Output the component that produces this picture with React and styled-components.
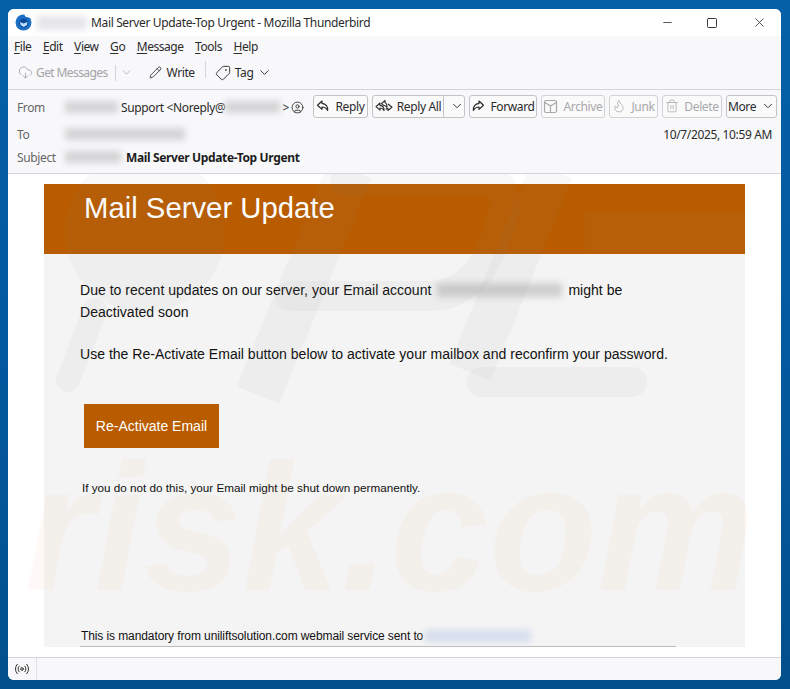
import styled, { createGlobalStyle } from "styled-components";
import { ChevronDown, CircleUser, CloudDownload, Flame, Minus, Pencil, Radio, Square, Tag, Trash2, X } from "lucide-react";

const GlobalStyle = createGlobalStyle`
  html, body {
    margin: 0;
    padding: 0;
    height: 100%;
  }
  body {
    background: #03589c;
    font-family: "Noto Sans", "Open Sans", sans-serif;
    overflow: hidden;
  }
`;

const Desktop = styled.div`
  width: 790px;
  height: 689px;
  box-sizing: border-box;
  padding: 9px 9px 9px 8px;
  background: linear-gradient(180deg, #0560a8 0%, #03589c 60%, #024f8c 100%);
  overflow: hidden;
`;
const Window = styled.div`
  height: 671px;
  display: flex;
  flex-direction: column;
  background: #fff;
  border-radius: 6px;
  overflow: hidden;
`;
const TitleBar = styled.div`
  height: 27px;
  flex: none;
  display: flex;
  align-items: center;
  padding-left: 7px;
  background: #fff;
  font-size: 12px;
  color: #2b2b2b;
  white-space: nowrap;
`;
const TitleText = styled.span`
  margin-left: 4px;
  letter-spacing: -0.36px;
`;
const WindowControls = styled.div`
  margin-left: auto;
  display: flex;
  align-items: center;
  gap: 32px;
  padding-right: 14px;
  color: #222;
`;
const CloseIcon = styled(X)`
  margin-left: 2px;
`;
const Blur = styled.span`
  display: inline-block;
  flex: none;
  width: ${(p) => p.$w}px;
  height: ${(p) => p.$h || 12}px;
  margin: ${(p) => p.$m || "0"};
  background: ${(p) => p.$c || "#d4d4d6"};
  filter: blur(3px);
`;
const MenuBar = styled.div`
  height: 20px;
  flex: none;
  display: flex;
  align-items: center;
  gap: 11.5px;
  padding-left: 6px;
  background: #f8f8fa;
  font-size: 12px;
  color: #2b2b2b;
  letter-spacing: -0.45px;
`;
const AccessKey = styled.span`
  text-decoration: underline;
  text-underline-offset: 2px;
`;
const ToolBar = styled.div`
  height: 34px;
  flex: none;
  display: flex;
  align-items: center;
  padding-left: 10px;
  background: #f8f8fa;
  border-bottom: 1px solid #d5d5d7;
  box-sizing: border-box;
  font-size: 12px;
  letter-spacing: -0.4px;
`;
const ToolItem = styled.div`
  display: flex;
  align-items: center;
  gap: ${(p) => p.$gap || 5}px;
  margin-left: ${(p) => p.$ml || 0}px;
  color: ${(p) => (p.$off ? "#a4a4a6" : "#2b2b2b")};
`;
const GetMessages = styled(ToolItem)`
  letter-spacing: -0.6px;
`;
const TagIcon = styled(Tag)`
  transform: scaleX(-1);
`;
const ToolDivider = styled.div`
  width: 1px;
  height: ${(p) => p.$h || 16}px;
  margin: 0 0 ${(p) => p.$up || 0}px ${(p) => p.$ml || 0}px;
  background: #d5d5d7;
`;
const Header = styled.div`
  height: 84px;
  flex: none;
  box-sizing: border-box;
  padding: 4px 4px 0 9px;
  background: #f8f8fa;
  border-bottom: 1px solid #d5d5d7;
  font-size: 12px;
  letter-spacing: -0.36px;
  color: #2b2b2b;
`;
const HeaderRow = styled.div`
  display: flex;
  align-items: center;
  height: ${(p) => p.$h}px;
`;
const HeaderLabel = styled.div`
  width: 48px;
  flex: none;
  color: #666;
`;
const SenderIcon = styled.span`
  display: flex;
  margin-left: 2px;
`;
const Buttons = styled.div`
  margin: -2px 0 0 auto;
  display: flex;
  gap: 4px;
`;
const Button = styled.div`
  box-sizing: border-box;
  width: ${(p) => p.$w}px;
  height: 23px;
  display: flex;
  align-items: center;
  justify-content: center;
  gap: 5px;
  background: #fafafb;
  border: 1px solid ${(p) => (p.$off ? "#d2d2d4" : "#c4c4c6")};
  border-radius: 3px;
  color: ${(p) => (p.$off ? "#a8a8aa" : "#2b2b2b")};
`;
const SplitButton = styled(Button)`
  padding: 0;
  justify-content: flex-start;
`;
const SplitMain = styled.div`
  display: flex;
  align-items: center;
  justify-content: center;
  gap: 4px;
  width: 70px;
  height: 100%;
  border-right: 1px solid #c4c4c6;
`;
const SplitArrow = styled.div`
  flex: 1;
  display: flex;
  justify-content: center;
`;
const DateText = styled.div`
  margin-left: auto;
  padding-right: 5px;
`;
const SubjectText = styled.strong`
  font-weight: 700;
  color: #1c1c1c;
`;
const MessagePane = styled.div`
  position: relative;
  flex: 1;
  min-height: 0;
  padding: 10px 0 0 36px;
  background: #fff;
  overflow: hidden;
  font-family: "Liberation Sans", Arial, sans-serif;
  color: #111;
`;
const Card = styled.div`
  width: 701px;
  height: 463px;
  display: flex;
  flex-direction: column;
  background: #f4f4f4;
`;
const Banner = styled.div`
  height: 70px;
  flex: none;
  box-sizing: border-box;
  padding: 6px 0 0 40px;
  background: #b95c00;
  color: #fff;
  font-size: 29.3px;
  line-height: 36px;
`;
const CardBody = styled.div`
  flex: 1;
  display: flex;
  flex-direction: column;
  padding: 25px 0 0 36px;
`;
const Paragraph = styled.div`
  width: ${(p) => p.$w}px;
  font-size: 14.05px;
  line-height: 22px;
  margin-bottom: 20px;
`;
const ActionButton = styled.div`
  width: 135px;
  height: 44px;
  margin: 19px 0 0 4px;
  display: flex;
  align-items: center;
  justify-content: center;
  background: #b95c00;
  color: #fff;
  font-size: 14px;
`;
const SmallNote = styled.div`
  margin: 32px 0 0 2px;
  font-size: 11.7px;
  line-height: 16px;
`;
const Footer = styled.div`
  margin-top: auto;
  width: 596px;
  display: flex;
  align-items: center;
  height: 22px;
  border-bottom: 1px solid #bbb;
  font-size: 12px;
  letter-spacing: -0.1px;
  padding-left: 1px;
  box-sizing: border-box;
`;
const StatusBar = styled.div`
  height: 23px;
  flex: none;
  display: flex;
  background: #f8f8fa;
  border-top: 1px solid #d5d5d7;
  box-sizing: border-box;
`;
const StatusIcon = styled.div`
  width: 28px;
  display: flex;
  align-items: center;
  justify-content: center;
  border-right: 1px solid #e2e2e4;
  color: #333;
`;
const Watermark = styled.svg`
  position: absolute;
  inset: 0;
  pointer-events: none;
`;
const WatermarkText = styled.text`
  font-family: "Liberation Sans", Arial, sans-serif;
  font-weight: 700;
  font-style: italic;
  font-size: 180px;
  fill: #e8741c;
  opacity: 0.035;
`;

function Logo() {
  return (
    <svg width="17" height="17" viewBox="0 0 17 17">
      <circle cx="8.5" cy="8.5" r="8" fill="#1b6fc4" />
      <circle cx="8.8" cy="9.2" r="4.6" fill="#0a4c9a" />
      <path d="M5 8l3.6 1.6L12.4 8 12 11l-3.2 2L5.6 11z" fill="#bfe0ff" />
      <path d="M9 0.5c3 0 6 2 7 4-2-1-3-1.6-5-1.6z" fill="#fff" />
    </svg>
  );
}

function ReplyIcon({ flip }) {
  return (
    <svg width="14" height="14" viewBox="0 0 14 14" fill="none" stroke="currentColor" strokeWidth="1.2" strokeLinejoin="round" transform={flip ? "scale(-1 1)" : undefined}>
      <path d="M6 2L1.5 6.2 6 10.4V8c2.600 0 4.200 1 5.600 3.400C12 7.600 10 4.800 6 4.400z" />
    </svg>
  );
}

function ReplyAllIcon() {
  return (
    <svg width="18" height="14" viewBox="0 0 18 14" fill="none" stroke="currentColor" strokeWidth="1.1" strokeLinejoin="round">
      <path d="M5 4L1 7.600 5 11.200V9c2 0 3 .7 4 2.600.3-3-1.200-5-4-5.200z" />
      <path d="M10 1.500L6.500 4.600 8.500 6.200c1.500.1 2.600.9 3.400 2.400.5-3-1.200-5-1.900-5z" />
      <path d="M13 5l4 3.200-4 3.300V9.600c-1 0-1.800.2-2.400.7" />
    </svg>
  );
}

function ArchiveIcon() {
  return (
    <svg width="15" height="15" viewBox="0 0 15 15" fill="none" stroke="currentColor" strokeWidth="1.2" strokeLinejoin="round">
      <rect x="1.500" y="1.500" width="12" height="12" rx="1.500" />
      <path d="M1.800 3.500L7.500 7l5.700-3.500M7.500 7v6.500" />
    </svg>
  );
}

function App() {
  return (
    <Desktop>
      <GlobalStyle />
      <Window>
        <TitleBar>
          <Logo />
          <Blur $w={50} $h={14} $c="#e6e6ea" $m="0 0 0 5px" />
          <TitleText>Mail Server Update-Top Urgent - Mozilla Thunderbird</TitleText>
          <WindowControls>
            <Minus size={13} strokeWidth={1.4} />
            <Square size={12} strokeWidth={1.8} />
            <CloseIcon size={15} strokeWidth={1.2} />
          </WindowControls>
        </TitleBar>
        <MenuBar>
          <span><AccessKey>F</AccessKey>ile</span>
          <span><AccessKey>E</AccessKey>dit</span>
          <span><AccessKey>V</AccessKey>iew</span>
          <span><AccessKey>G</AccessKey>o</span>
          <span><AccessKey>M</AccessKey>essage</span>
          <span><AccessKey>T</AccessKey>ools</span>
          <span><AccessKey>H</AccessKey>elp</span>
        </MenuBar>
        <ToolBar>
          <GetMessages $off $gap={3}>
            <CloudDownload size={15} strokeWidth={1.3} />
            Get Messages
          </GetMessages>
          <ToolDivider $ml={7} />
          <ToolItem $off $ml={4}>
            <ChevronDown size={13} strokeWidth={1.4} />
          </ToolItem>
          <ToolItem $ml={16}>
            <Pencil size={13} strokeWidth={1.5} />
            Write
          </ToolItem>
          <ToolDivider $ml={10} $h={17} $up={6} />
          <ToolItem $ml={9} $gap={4}>
            <TagIcon size={16} strokeWidth={1.4} />
            Tag
            <ChevronDown size={15} strokeWidth={1.5} />
          </ToolItem>
        </ToolBar>
        <Header>
          <HeaderRow $h={26}>
            <HeaderLabel>From</HeaderLabel>
            <Blur $w={53} $m="0 3px 0 0" />
            Support &lt;Noreply@
            <Blur $w={55} $m="0 2px 0 0" />
            &gt;
            <SenderIcon>
              <CircleUser size={13} strokeWidth={1.6} />
            </SenderIcon>
            <Buttons>
              <Button $w={55}>
                <ReplyIcon />
                Reply
              </Button>
              <SplitButton $w={93}>
                <SplitMain>
                  <ReplyAllIcon />
                  Reply All
                </SplitMain>
                <SplitArrow>
                  <ChevronDown size={14} strokeWidth={1.6} />
                </SplitArrow>
              </SplitButton>
              <Button $w={68}>
                <ReplyIcon flip />
                Forward
              </Button>
              <Button $w={64} $off>
                <ArchiveIcon />
                Archive
              </Button>
              <Button $w={49} $off>
                <Flame size={14} strokeWidth={1.3} />
                Junk
              </Button>
              <Button $w={60} $off>
                <Trash2 size={14} strokeWidth={1.3} />
                Delete
              </Button>
              <Button $w={51}>
                More
                <ChevronDown size={14} strokeWidth={1.6} />
              </Button>
            </Buttons>
          </HeaderRow>
          <HeaderRow $h={28}>
            <HeaderLabel>To</HeaderLabel>
            <Blur $w={120} />
            <DateText>10/7/2025, 10:59 AM</DateText>
          </HeaderRow>
          <HeaderRow $h={18}>
            <HeaderLabel>Subject</HeaderLabel>
            <Blur $w={56} $m="0 5px 0 0" />
            <SubjectText>Mail Server Update-Top Urgent</SubjectText>
          </HeaderRow>
        </Header>
        <MessagePane>
          <Card>
            <Banner>Mail Server Update</Banner>
            <CardBody>
              <Paragraph $w={600}>
                Due to recent updates on our server, your Email account
                <Blur $w={125} $h={14} $c="#cfcfcf" $m="0 6px -2px 6px" />
                might be Deactivated soon
              </Paragraph>
              <Paragraph $w={640}>
                Use the Re-Activate Email button below to activate your mailbox and reconfirm your password.
              </Paragraph>
              <ActionButton>Re-Activate Email</ActionButton>
              <SmallNote>If you do not do this, your Email might be shut down permanently.</SmallNote>
              <Footer>
                This is mandatory from uniliftsolution.com webmail service sent to
                <Blur $w={106} $h={12} $c="#d6deee" $m="0 0 0 2px" />
              </Footer>
            </CardBody>
          </Card>
          <Watermark width="773" height="483" viewBox="8 174 773 483">
            <g fill="none" stroke="#808080" strokeOpacity="0.06" strokeLinecap="round" strokeLinejoin="round">
              <circle cx="145" cy="232" r="80" fill="#808080" fillOpacity="0.05" stroke="none" />
              <path d="M95 310L68 380" strokeWidth="24" />
              <path d="M350 170L258 395" strokeWidth="46" strokeLinecap="butt" />
              <path d="M345 180H480Q515 180 500 225Q480 296 430 296H290" strokeWidth="30" />
              <path d="M552 170L470 372" strokeWidth="44" strokeLinecap="butt" />
              <path d="M585 233H745" strokeWidth="40" strokeLinecap="butt" />
              <path d="M482 382H632" strokeWidth="30" />
            </g>
            <WatermarkText x="25" y="590" textLength="730" lengthAdjust="spacingAndGlyphs">risk.com</WatermarkText>
          </Watermark>
        </MessagePane>
        <StatusBar>
          <StatusIcon>
            <Radio size={16} strokeWidth={1.5} />
          </StatusIcon>
        </StatusBar>
      </Window>
    </Desktop>
  );
}

export default App;
